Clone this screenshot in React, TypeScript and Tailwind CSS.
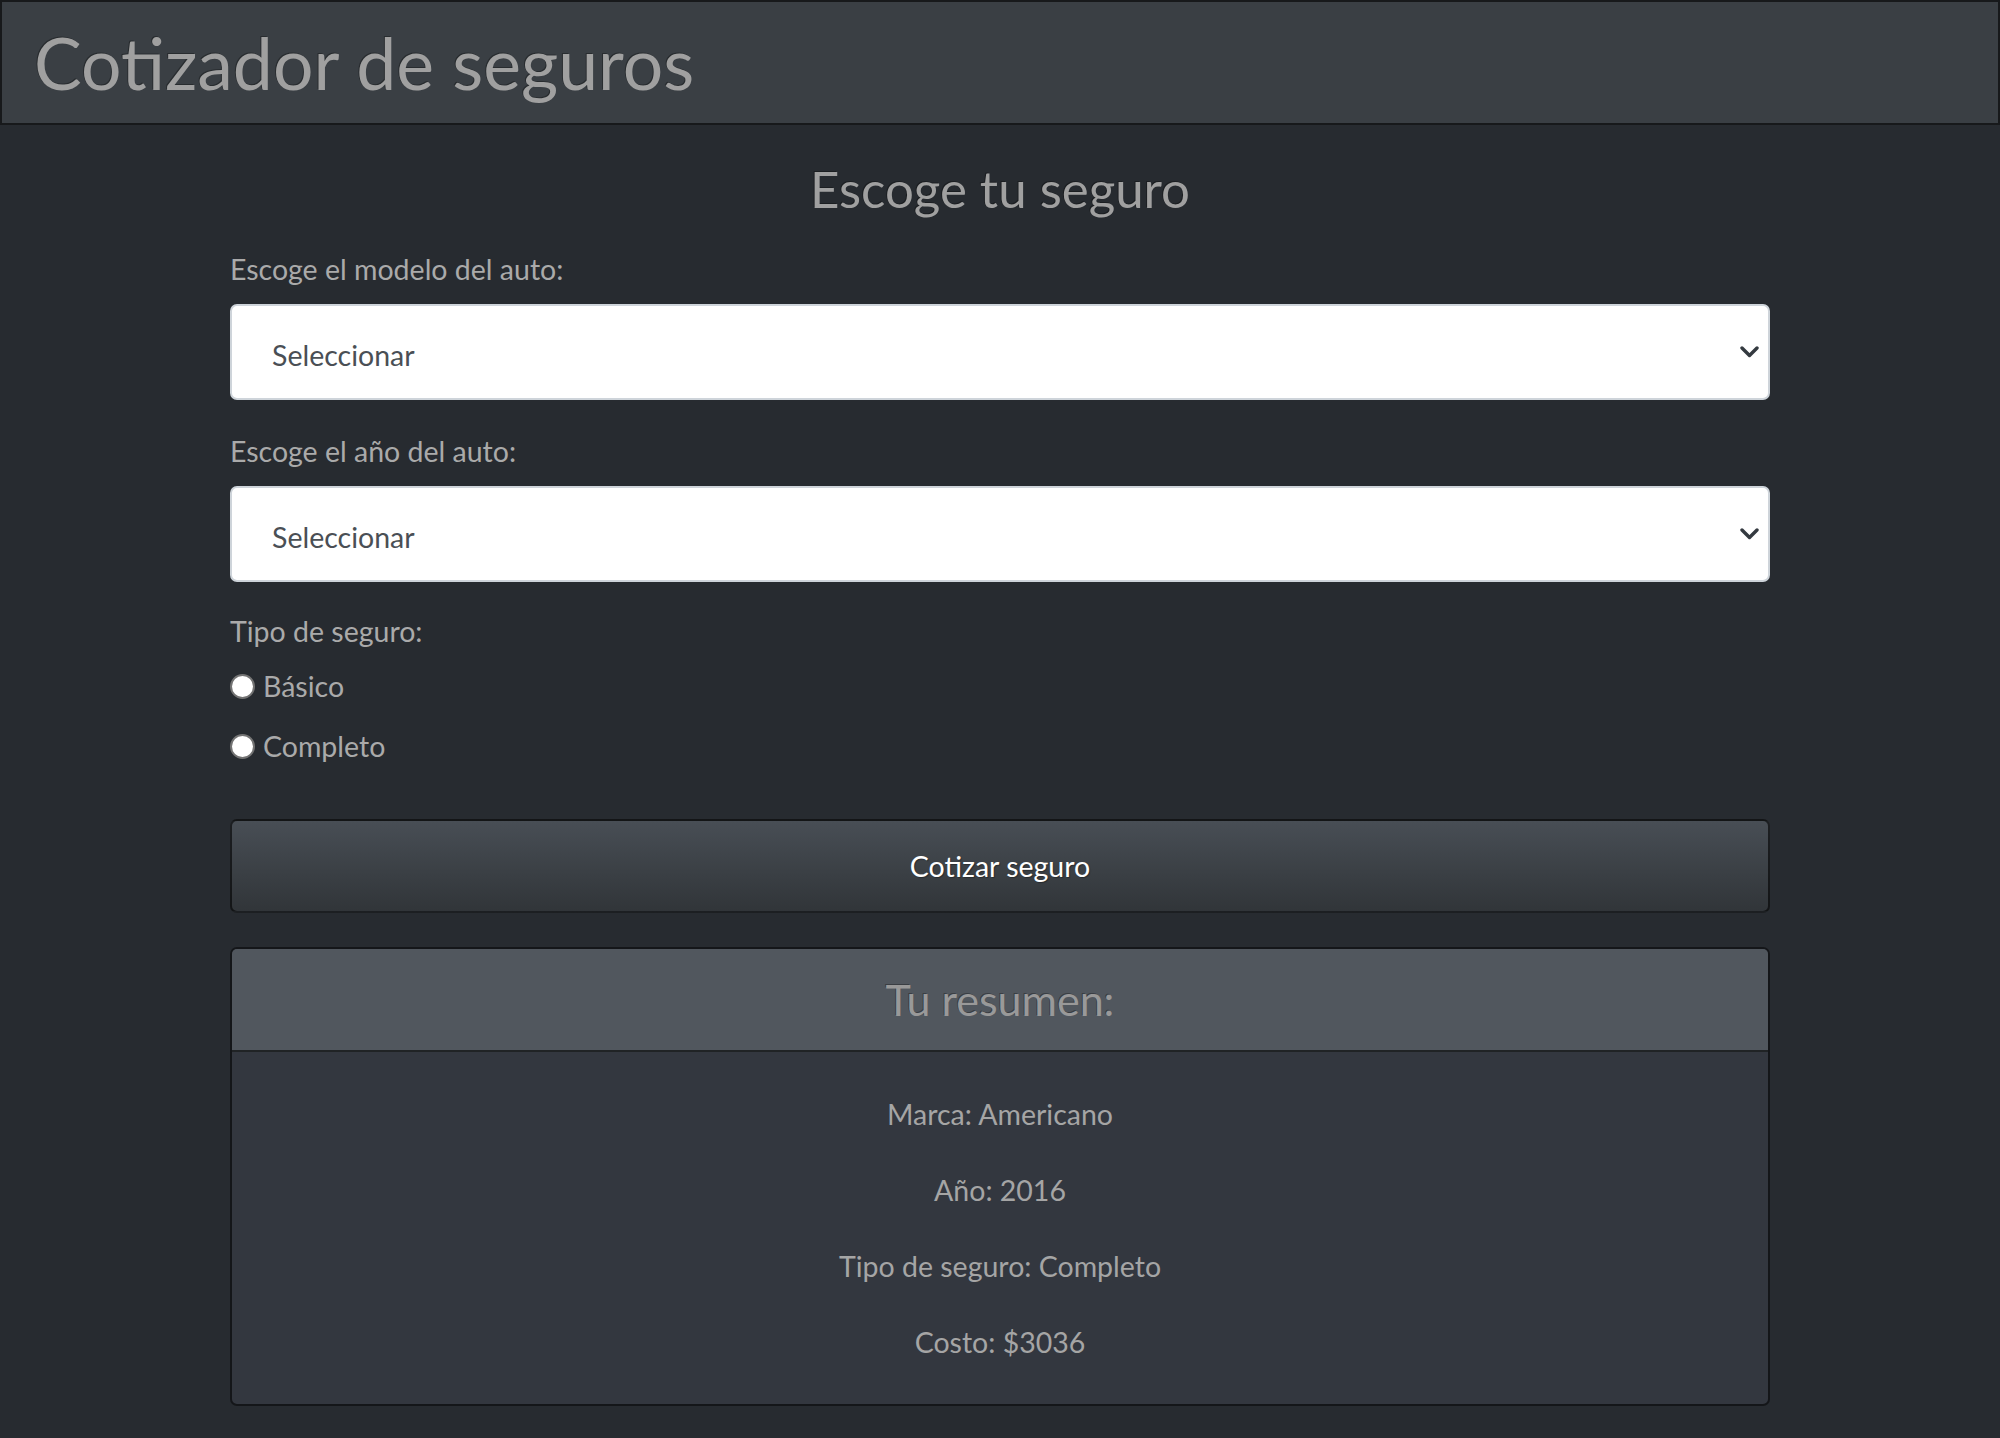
import { useState } from 'react';

const resumen = [
  'Marca: Americano',
  'Año: 2016',
  'Tipo de seguro: Completo',
  'Costo: $3036',
];

const Chevron = () => (
  <svg
    className="pointer-events-none absolute right-[11px] top-1/2 -translate-y-1/2"
    width="19"
    height="12"
    viewBox="0 0 19 12"
    fill="none"
  >
    <path d="M2 2l7.5 7.5L17 2" stroke="#343a40" strokeWidth="3.4" strokeLinecap="round" strokeLinejoin="round" />
  </svg>
);

const SelectField = ({ label, first }: { label: string; first?: boolean }) => (
  <div className={first ? 'mt-[28px]' : 'mt-[29px]'}>
    <label className="block text-[28.5px] leading-[44px]">{label}</label>
    <div className="relative mt-[13px]">
      <select className="h-[96px] w-full appearance-none rounded-[7px] border-2 border-[#ced4da] bg-white pl-[40px] pt-[6px] text-[28.5px] text-[#4a4f55] outline-none">
        <option>Seleccionar</option>
      </select>
      <Chevron />
    </div>
  </div>
);

export default function App() {
  const [plan, setPlan] = useState('');

  return (
    <div className="min-h-screen bg-[#272b30] font-['Lato',sans-serif] text-[#aaa]">
      <header className="flex h-[125px] items-center border-2 border-black/60 bg-[#3a3f44] pl-[32px]">
        <h1 className="text-[71.5px] leading-[1.2] text-[#a0a0a0] [text-shadow:-1px_-1px_0_rgba(0,0,0,0.3)]">
          Cotizador de seguros
        </h1>
      </header>

      <main className="mx-auto w-[1540px] pb-[33px]">
        <h2 className="mt-[33px] text-center text-[51px] leading-[61px] text-[#a0a0a0] [text-shadow:-1px_-1px_0_rgba(0,0,0,0.3)]">
          Escoge tu seguro
        </h2>

        <form onSubmit={(e) => e.preventDefault()}>
          <SelectField label="Escoge el modelo del auto:" first />
          <SelectField label="Escoge el año del auto:" />

          <p className="mt-[27px] text-[28.5px] leading-[44px]">Tipo de seguro:</p>
          <div className="mt-[11px] flex flex-col gap-[16px]">
            {['Básico', 'Completo'].map((t) => (
              <label key={t} className="flex h-[44px] items-center gap-[8px] text-[28.5px]">
                <input
                  type="radio"
                  name="plan"
                  checked={plan === t}
                  onChange={() => setPlan(t)}
                  className="h-[25px] w-[25px] appearance-none rounded-full border-2 border-[#737373] bg-white checked:border-[7px] checked:border-[#3a3f44]"
                />
                {t}
              </label>
            ))}
          </div>

          <button
            type="submit"
            className="mt-[51px] h-[94px] w-full rounded-[7px] border-2 border-black/60 bg-[linear-gradient(#484e55,#3a3f44_60%,#313539)] text-[28.5px] text-white [text-shadow:1px_1px_1px_rgba(0,0,0,0.3)]"
          >
            Cotizar seguro
          </button>
        </form>

        <section className="mt-[34px] overflow-hidden rounded-[7px] border-2 border-black/60 bg-[#33373f]">
          <div className="flex h-[103px] items-center justify-center border-b-2 border-black/60 bg-[#51575e]">
            <h4 className="text-[43px] leading-[52px] text-[#999] [text-shadow:-1px_-1px_0_rgba(0,0,0,0.3)]">
              Tu resumen:
            </h4>
          </div>
          <div className="flex flex-col items-center gap-[32px] pb-[40px] pt-[40px] text-[28.5px] leading-[44px] text-[#a5a5a5]">
            {resumen.map((line) => (
              <p key={line}>{line}</p>
            ))}
          </div>
        </section>
      </main>
    </div>
  );
}
